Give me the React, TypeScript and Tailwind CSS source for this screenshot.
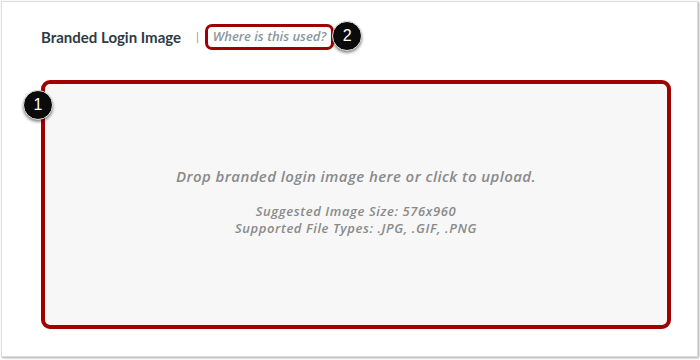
export default function App() {
  return (
    <div className="w-[700px] h-[360px] bg-white font-['Lato',sans-serif]">
      <div className="ml-px mt-px w-[697px] h-[356px] border border-[#dcdcdc] shadow-[1px_1px_2px_rgba(0,0,0,0.35)] bg-white pl-[39px] pt-[22px]">
        {/* header */}
        <div className="flex items-center h-[26px]">
          <span className="text-[15px] font-bold text-[#2d3b45]">Branded Login Image</span>
          <span className="ml-[15px] text-[11px] text-[#8b969e]">|</span>
          <div className="ml-[6px] h-[26px] px-[5px] flex items-center rounded-[7px] border-[3px] border-[#a10000]">
            <span className="font-['Open_Sans',sans-serif] text-[13px] font-semibold italic text-[#8b969e]">Where is this used?</span>
          </div>
          <Badge n="2" className="-ml-[2px] -mt-[3px]" />
        </div>

        {/* drop zone */}
        <div className="relative mt-[30px] w-[630px] h-[249px] rounded-[9px] border-4 border-[#a10000] bg-[#f7f7f7]">
          <Badge n="1" className="absolute -left-[22px] top-[6px]" />
          <div className="flex flex-col items-center pt-[82px] text-[#8a8a8a] italic font-semibold font-['Open_Sans',sans-serif]">
            <p className="text-[15px] leading-[20px] tracking-[0.4px]">Drop branded login image here or click to upload.</p>
            <p className="mt-[17px] text-[13px] leading-[17px] tracking-[0.6px]">Suggested Image Size: 576x960</p>
            <p className="text-[13px] leading-[17px] tracking-[0.6px]">Supported File Types: .JPG, .GIF, .PNG</p>
          </div>
        </div>
      </div>
    </div>
  )
}

function Badge({ n, className = '' }: { n: string; className?: string }) {
  return (
    <div
      className={`w-[30px] h-[30px] rounded-full bg-[#0b0b0b] border border-[#e5e5e5] shadow-[0_2px_3px_rgba(0,0,0,0.45)] flex items-center justify-center text-white text-[16px] font-['Liberation_Sans',sans-serif] ${className}`}
    >
      {n}
    </div>
  )
}
